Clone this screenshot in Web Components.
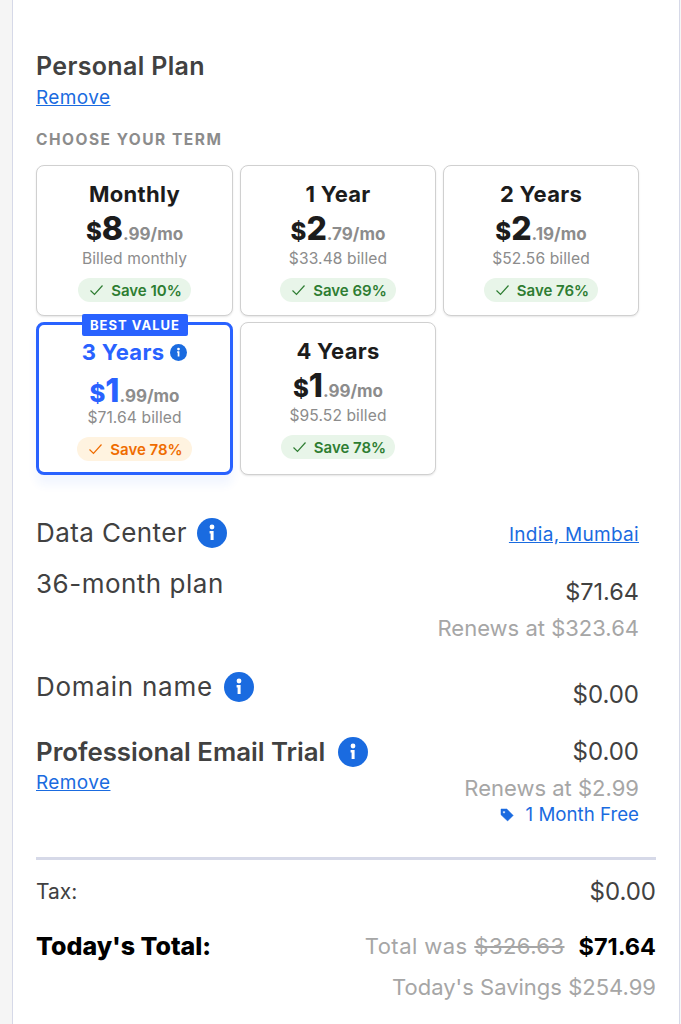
<!DOCTYPE html>
<html>
<head>
<meta charset="utf-8">
<title>Plan summary</title>
<style>
  html, body { margin: 0; background: #f5f5f5; height: 1024px; overflow: hidden; }
  body { font-family: Inter, "Liberation Sans", sans-serif; color: #414141; }
</style>
</head>
<body>
<cart-panel>
  <plan-header></plan-header>
  <term-grid>
    <term-card name="Monthly" big="8" rest=".99/mo" billed="Billed monthly" save="Save 10%"></term-card>
    <term-card name="1 Year" big="2" rest=".79/mo" billed="$33.48 billed" save="Save 69%"></term-card>
    <term-card name="2 Years" big="2" rest=".19/mo" billed="$52.56 billed" save="Save 76%"></term-card>
    <term-card selected name="3 Years" big="1" rest=".99/mo" billed="$71.64 billed" save="Save 78%"></term-card>
    <term-card name="4 Years" big="1" rest=".99/mo" billed="$95.52 billed" save="Save 78%"></term-card>
  </term-grid>
  <order-lines></order-lines>
  <order-total></order-total>
</cart-panel>

<script>
const infoSvg = size => `<svg width="${size}" height="${size}" viewBox="0 0 30 30" style="display:block;flex:none"><circle cx="15" cy="15" r="15" fill="#1a6be0"/><circle cx="15" cy="9" r="2.4" fill="#fff"/><path d="M12.6 13h4v9h-3v-6.6h-1z" fill="#fff"/></svg>`;

class CartPanel extends HTMLElement {
  connectedCallback() {
    this.attachShadow({ mode: 'open' });
    this.shadowRoot.innerHTML = `
      <style>
        :host {
          display: block;
          box-sizing: border-box;
          margin-left: 12px;
          width: 668px;
          height: 1024px;
          background: #fff;
          border-left: 1px solid #d6d9e8;
          border-right: 1px solid #d6d9e8;
          padding: 50px 0 0 23px;
        }
      </style>
      <slot></slot>
    `;
  }
}

class PlanHeader extends HTMLElement {
  connectedCallback() {
    this.attachShadow({ mode: 'open' });
    this.shadowRoot.innerHTML = `
      <style>
        :host { display: block; }
        h2 { margin: 0; font-size: 25px; line-height: 33px; font-weight: 600; letter-spacing: .35px; color: #414141; }
        a { display: block; width: max-content; margin-top: 2px; font-size: 19px; line-height: 26px; letter-spacing: .4px; color: #1a6be0; text-decoration: underline; }
        h3 { margin: 19px 0 0; font-size: 15.5px; line-height: 20px; font-weight: 700; letter-spacing: 1.5px; color: #8c8c8c; }
      </style>
      <h2>Personal Plan</h2>
      <a href="#">Remove</a>
      <h3>CHOOSE YOUR TERM</h3>
    `;
  }
}

class TermGrid extends HTMLElement {
  connectedCallback() {
    this.attachShadow({ mode: 'open' });
    this.shadowRoot.innerHTML = `
      <style>
        :host {
          display: grid;
          grid-template-columns: 197px 196px 196px;
          grid-template-rows: 151px 153px;
          column-gap: 7px;
          row-gap: 6px;
          margin-top: 15px;
          width: 603px;
        }
      </style>
      <slot></slot>
    `;
  }
}

class TermCard extends HTMLElement {
  connectedCallback() {
    const a = n => this.getAttribute(n);
    const selected = this.hasAttribute('selected');
    this.attachShadow({ mode: 'open' });
    this.shadowRoot.innerHTML = `
      <style>
        :host {
          display: flex;
          flex-direction: column;
          align-items: center;
          position: relative;
          box-sizing: border-box;
          border: 1px solid #d0d0d0;
          border-radius: 8px;
          box-shadow: 0 1px 2px rgba(0,0,0,.1);
          background: #fff;
          padding-top: 14px;
        }
        :host([selected]) {
          border: 3px solid #2962ff;
          padding-top: 13px;
          box-shadow: 0 10px 10px rgba(41,98,255,.06);
        }
        .name { display: flex; align-items: center; gap: 6px; font-size: 22px; line-height: 28px; font-weight: 700; color: #1c1c1c; letter-spacing: .3px; }
        :host([selected]) .name, :host([selected]) .sym, :host([selected]) .big { color: #2962ff; }
        .price { display: flex; align-items: baseline; margin-top: 4px; line-height: 34px; height: 34px; color: #8c8c8c; font-weight: 700; font-size: 17px; }
        :host([selected]) .price { margin-top: 8px; }
        .sym { font-size: 24px; font-weight: 800; color: #1c1c1c; }
        .big { font-size: 32px; font-weight: 800; color: #1c1c1c; }
        .billed { font-size: 15.6px; line-height: 20px; letter-spacing: .1px; color: #8c8c8c; margin-top: 3px; }
        :host([selected]) .billed { margin-top: 0; }
        .badge {
          display: flex; align-items: center; gap: 7px;
          height: 24px; box-sizing: border-box; padding: 0 9px 0 11px; margin-top: 9px;
          border-radius: 12px; background: #e8f5e9; color: #2e7d32;
          font-size: 15px; font-weight: 600;
        }
        :host([selected]) .badge { background: #fff3e0; color: #ef6c00; margin-top: 9px; }
        .flag {
          position: absolute; top: -11px; left: 43px;
          height: 22px; padding: 0 8px; border-radius: 2px;
          background: #2962ff; color: #fff;
          font-size: 13px; line-height: 22px; font-weight: 700; letter-spacing: 1px; white-space: nowrap;
        }
      </style>
      ${selected ? '<div class="flag">BEST VALUE</div>' : ''}
      <div class="name">${a('name')}${selected ? infoSvg(17) : ''}</div>
      <div class="price"><span class="sym">$</span><span class="big">${a('big')}</span><span>${a('rest')}</span></div>
      <div class="billed">${a('billed')}</div>
      <div class="badge">
        <svg width="15" height="12" viewBox="0 0 15 12" fill="none" stroke="currentColor" stroke-width="1.2"><path d="M1.5 6.5l4 4L13.5 1.5"/></svg>
        <span>${a('save')}</span>
      </div>
    `;
  }
}

class OrderLines extends HTMLElement {
  connectedCallback() {
    this.attachShadow({ mode: 'open' });
    this.shadowRoot.innerHTML = `
      <style>
        :host { display: block; width: 603px; margin-top: 42px; color: #414141; }
        .row { display: flex; justify-content: space-between; align-items: flex-start; }
        .label { display: flex; align-items: center; gap: 11px; font-size: 26px; line-height: 32px; letter-spacing: .5px; }
        .amount { font-size: 24px; line-height: 32px; text-align: right; }
        .muted { font-size: 22px; line-height: 28px; color: #a6a6a6; text-align: right; }
        a { color: #1a6be0; text-decoration: underline; font-size: 19px; line-height: 26px; letter-spacing: .4px; }
        b { font-weight: 600; font-size: 25.8px; letter-spacing: 0; }
        .free { display: flex; justify-content: flex-end; align-items: center; gap: 12px; color: #1a6be0; font-size: 18.7px; line-height: 26px; }
      </style>
      <div class="row" style="height:35px">
        <div class="label" style="letter-spacing:.4px;gap:10px">Data Center ${infoSvg(30)}</div>
        <a href="#" style="letter-spacing:.3px;margin-top:5px">India, Mumbai</a>
      </div>
      <div class="row" style="margin-top:19px;height:84px">
        <div class="label" style="margin-top:-3px">36-month plan</div>
        <div>
          <div class="amount" style="margin-top:5px;font-size:23.5px">$71.64</div>
          <div class="muted" style="margin-top:6px">Renews at $323.64</div>
        </div>
      </div>
      <div class="row" style="margin-top:16px;height:47px">
        <div class="label" style="letter-spacing:.75px">Domain name ${infoSvg(30)}</div>
        <div class="amount" style="margin-top:8px">$0.00</div>
      </div>
      <div class="row" style="margin-top:18px">
        <div>
          <div class="label" style="gap:13px"><b>Professional Email Trial</b> ${infoSvg(30)}</div>
          <a href="#" style="display:block;width:max-content;margin-top:2px">Remove</a>
        </div>
        <div>
          <div class="amount">$0.00</div>
          <div class="muted" style="margin-top:6px">Renews at $2.99</div>
          <div class="free">
            <svg width="14" height="14" viewBox="0 0 14 14"><path d="M1 1h5.8l6.4 6.4-5.6 5.6L1 6.8zM4 2.9a1.2 1.2 0 1 0 .01 0z" fill="#1a6be0" stroke="#1a6be0" stroke-width=".5" stroke-linejoin="round" fill-rule="evenodd"/></svg>
            <span>1 Month Free</span>
          </div>
        </div>
      </div>
    `;
  }
}

class OrderTotal extends HTMLElement {
  connectedCallback() {
    this.attachShadow({ mode: 'open' });
    this.shadowRoot.innerHTML = `
      <style>
        :host { display: block; width: 620px; margin-top: 29px; border-top: 3px solid #d6d9e8; color: #414141; }
        .row { display: flex; justify-content: space-between; align-items: center; }
        .tax { font-size: 21px; line-height: 32px; margin-top: 16px; }
        .amount { font-size: 24px; }
        .total { margin-top: 22px; height: 32px; }
        .total .label { font-size: 25px; font-weight: 800; color: #000; }
        .was { display: flex; align-items: center; gap: 14px; font-size: 22px; letter-spacing: .45px; color: #a6a6a6; }
        .now { font-size: 23.5px; letter-spacing: 0; font-weight: 700; color: #000; }
        .save { font-size: 22px; line-height: 28px; color: #a6a6a6; text-align: right; margin-top: 11px; }
      </style>
      <div class="row tax"><span>Tax:</span><span class="amount">$0.00</span></div>
      <div class="row total">
        <span class="label">Today's Total:</span>
        <div class="was"><span>Total was <s>$326.63</s></span><span class="now">$71.64</span></div>
      </div>
      <div class="save">Today's Savings $254.99</div>
    `;
  }
}

customElements.define('cart-panel', CartPanel);
customElements.define('plan-header', PlanHeader);
customElements.define('term-grid', TermGrid);
customElements.define('term-card', TermCard);
customElements.define('order-lines', OrderLines);
customElements.define('order-total', OrderTotal);
</script>
</body>
</html>
